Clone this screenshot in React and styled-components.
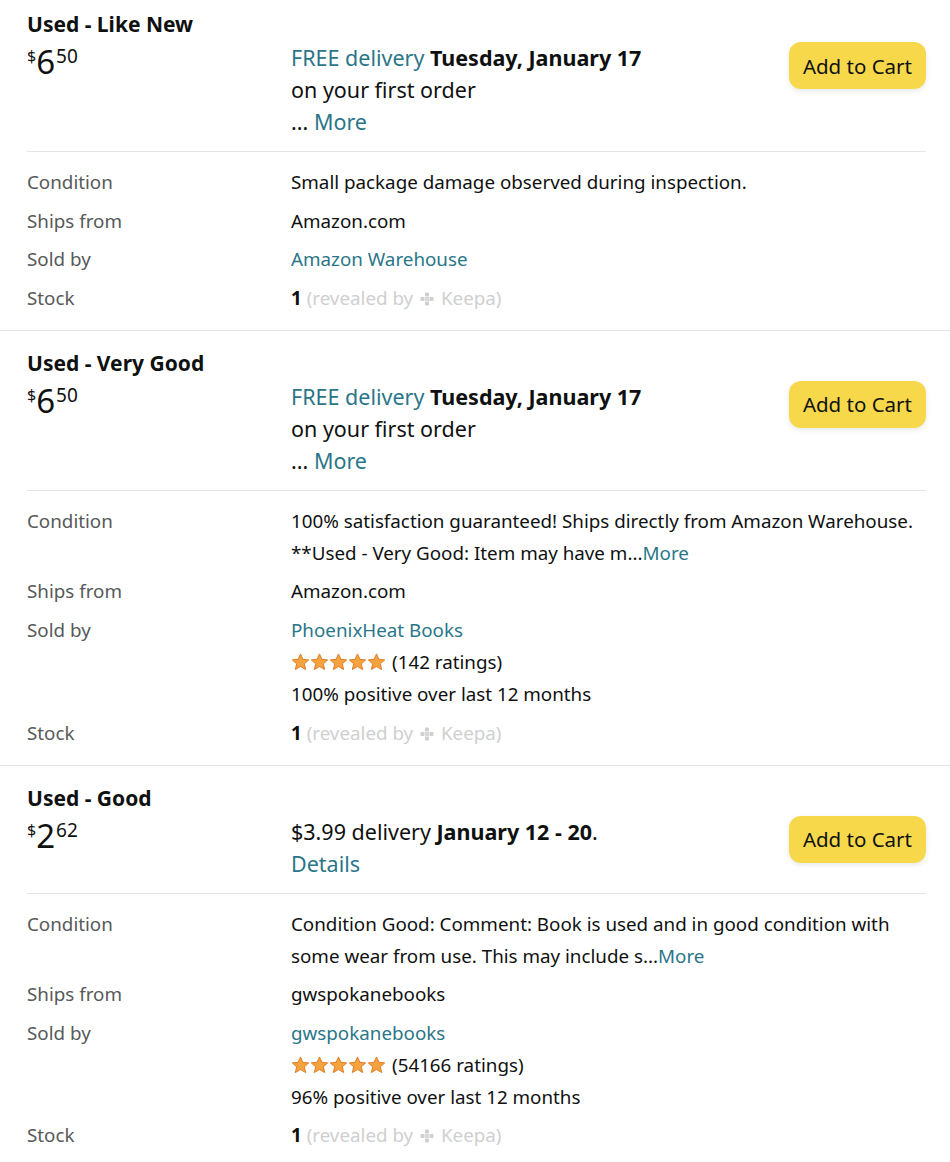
import React from 'react'
import styled, { createGlobalStyle } from 'styled-components'

const Global = createGlobalStyle`
  body {
    margin: 0;
    background: #fff;
    font-family: "Noto Sans", "Open Sans", sans-serif;
    color: #0f1111;
  }
`

const Page = styled.div`
  width: 950px;
`

const Offer = styled.section`
  padding: ${p => (p.first ? '11px' : '19px')} 24px 16px 27px;
  border-bottom: 1px solid #e3e6e6;
`

const Title = styled.h3`
  margin: 0;
  font-size: 21px;
  line-height: 27px;
  font-weight: 700;
`

const Header = styled.div`
  display: grid;
  grid-template-columns: 264px 1fr auto;
  align-items: start;
  margin-top: 4px;
  padding-bottom: 13px;
  border-bottom: 1px solid #e3e6e6;
`

const Price = styled.div`
  display: flex;
  align-items: flex-start;
  padding-top: 5px;
  line-height: 1;
`

const Sup = styled.span`
  font-size: ${p => p.size}px;
  margin-top: ${p => p.top || 0}px;
`

const Whole = styled.span`
  font-size: 33px;
  line-height: 30px;
  margin-right: 1px;
`

const Delivery = styled.div`
  font-size: 21.5px;
  line-height: 32px;
`

const Link = styled.span`
  color: #2a7689;
`

const Bold = styled.b`
  font-weight: 700;
`

const CartButton = styled.button`
  font-family: inherit;
  font-size: 20.5px;
  color: #0f1111;
  background: #f8d84b;
  border: none;
  border-radius: 12px;
  height: 47px;
  padding: 0 14px;
  box-shadow: 0 2px 5px rgba(213, 217, 217, 0.6);
`

const Details = styled.dl`
  display: grid;
  grid-template-columns: 264px 1fr;
  row-gap: 6.6px;
  margin: 0;
  padding-top: 14px;
  font-size: 18.8px;
  line-height: 32px;
`

const Label = styled.dt`
  color: #565959;
`

const Value = styled.dd`
  margin: 0;
`

const Stars = styled.span`
  display: inline-flex;
  vertical-align: -2px;
  margin-right: 6px;
`

const Muted = styled.span`
  color: #cfcfcf;
`

const Star = () => (
  <svg width="19" height="18" viewBox="0 0 24 23">
    <path
      d="M12 1.2l3.1 6.9 7.4.7-5.6 5 1.7 7.4L12 17.3l-6.6 3.9 1.7-7.4-5.6-5 7.4-.7z"
      fill="#f5a33e"
      stroke="#de7921"
      strokeWidth="1.2"
      strokeLinejoin="round"
    />
  </svg>
)

const KeepaIcon = () => (
  <svg width="14" height="14" viewBox="0 0 14 14" style={{ verticalAlign: '-1px', margin: '0 2px' }}>
    <rect x="5" y="0.5" width="4" height="4" rx="0.8" fill="#d0d0d0" />
    <rect x="0.5" y="5" width="4" height="4" rx="0.8" fill="#d0d0d0" />
    <rect x="9.5" y="5" width="4" height="4" rx="0.8" fill="#d0d0d0" />
    <rect x="5" y="9.5" width="4" height="4" rx="0.8" fill="#d0d0d0" />
    <rect x="5" y="5" width="4" height="4" fill="#d9d9d9" />
  </svg>
)

const Rating = ({ count, positive }) => (
  <>
    <div>
      <Stars>
        {[0, 1, 2, 3, 4].map(i => <Star key={i} />)}
      </Stars>
      ({count} ratings)
    </div>
    <div>{positive}% positive over last 12 months</div>
  </>
)

const Stock = () => (
  <Value>
    <Bold>1</Bold> <Muted>(revealed by <KeepaIcon /> Keepa)</Muted>
  </Value>
)

const offers = [
  {
    title: 'Used - Like New',
    whole: '6',
    cents: '50',
    delivery: (
      <>
        <Link>FREE delivery</Link> <Bold>Tuesday, January 17</Bold>
        <div>on your first order</div>
        <div>
          ... <Link>More</Link>
        </div>
      </>
    ),
    condition: <>Small package damage observed during inspection.</>,
    shipsFrom: 'Amazon.com',
    seller: 'Amazon Warehouse'
  },
  {
    title: 'Used - Very Good',
    whole: '6',
    cents: '50',
    delivery: (
      <>
        <Link>FREE delivery</Link> <Bold>Tuesday, January 17</Bold>
        <div>on your first order</div>
        <div>
          ... <Link>More</Link>
        </div>
      </>
    ),
    condition: (
      <>
        100% satisfaction guaranteed! Ships directly from Amazon Warehouse.
        <br />
        **Used - Very Good: Item may have m...<Link>More</Link>
      </>
    ),
    shipsFrom: 'Amazon.com',
    seller: 'PhoenixHeat Books',
    rating: { count: 142, positive: 100 }
  },
  {
    title: 'Used - Good',
    whole: '2',
    cents: '62',
    delivery: (
      <>
        $3.99 delivery <Bold>January 12 - 20</Bold>.
        <div>
          <Link>Details</Link>
        </div>
      </>
    ),
    condition: (
      <>
        Condition Good: Comment: Book is used and in good condition with
        <br />
        some wear from use. This may include s...<Link>More</Link>
      </>
    ),
    shipsFrom: 'gwspokanebooks',
    seller: 'gwspokanebooks',
    rating: { count: 54166, positive: 96 }
  }
]

export default function App() {
  return (
    <Page>
      <Global />
      {offers.map((o, i) => (
        <Offer key={i} first={i === 0}>
          <Title>{o.title}</Title>
          <Header>
            <Price>
              <Sup size={16} top={1}>$</Sup>
              <Whole>{o.whole}</Whole>
              <Sup size={19}>{o.cents}</Sup>
            </Price>
            <Delivery>{o.delivery}</Delivery>
            <CartButton>Add to Cart</CartButton>
          </Header>
          <Details>
            <Label>Condition</Label>
            <Value>{o.condition}</Value>
            <Label>Ships from</Label>
            <Value>{o.shipsFrom}</Value>
            <Label>Sold by</Label>
            <Value>
              <Link>{o.seller}</Link>
              {o.rating && <Rating {...o.rating} />}
            </Value>
            <Label>Stock</Label>
            <Stock />
          </Details>
        </Offer>
      ))}
    </Page>
  )
}
